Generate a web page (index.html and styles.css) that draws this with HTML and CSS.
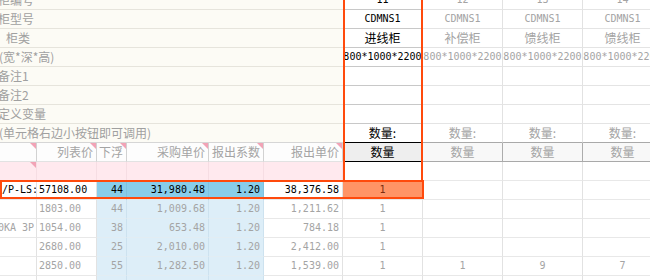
FILE: index.html
```html
<!DOCTYPE html>
<html lang="zh-CN">
<head>
<meta charset="utf-8">
<title>报价表</title>
<link rel="stylesheet" href="styles.css">
</head>
<body>
<div class="sheet">
  <div class="grid">
    <!-- 表头信息区 -->
    <div class="c lbl ind-2">柜编号</div>
    <div class="c sel ctr n k">11</div>
    <div class="c top ctr n">12</div>
    <div class="c top ctr n">13</div>
    <div class="c top ctr n">14</div>

    <div class="c lbl ind-2">柜型号</div>
    <div class="c sel ctr n k">CDMNS1</div>
    <div class="c top ctr n">CDMNS1</div>
    <div class="c top ctr n">CDMNS1</div>
    <div class="c top ctr n">CDMNS1</div>

    <div class="c lbl ind6">柜类</div>
    <div class="c sel ctr k">进线柜</div>
    <div class="c top ctr">补偿柜</div>
    <div class="c top ctr">馈线柜</div>
    <div class="c top ctr">馈线柜</div>

    <div class="c lbl ind-1">(宽*深*高)</div>
    <div class="c sel ctr n k">800*1000*2200</div>
    <div class="c top ctr n">800*1000*2200</div>
    <div class="c top ctr n">800*1000*2200</div>
    <div class="c top ctr n">800*1000*2200</div>

    <div class="c lbl ind-2">备注1</div>
    <div class="c sel"></div>
    <div class="c top"></div>
    <div class="c top"></div>
    <div class="c top"></div>

    <div class="c lbl ind-2">备注2</div>
    <div class="c sel"></div>
    <div class="c top"></div>
    <div class="c top"></div>
    <div class="c top"></div>

    <div class="c lbl ind-2">定义变量</div>
    <div class="c sel"></div>
    <div class="c top"></div>
    <div class="c top"></div>
    <div class="c top"></div>

    <div class="c lbl lbl-last ind-1">(单元格右边小按钮即可调用)</div>
    <div class="c sel sel-last ctr k">数量:</div>
    <div class="c top top-last ctr">数量:</div>
    <div class="c top top-last ctr">数量:</div>
    <div class="c top top-last ctr">数量:</div>

    <!-- 列标题 -->
    <div class="c hd tri"></div>
    <div class="c hd tri r">列表价</div>
    <div class="c hd tri r">下浮</div>
    <div class="c hd tri r">采购单价</div>
    <div class="c hd tri r">报出系数</div>
    <div class="c hd tri r">报出单价</div>
    <div class="c qh ctr">数量</div>
    <div class="c qh2 ctr">数量</div>
    <div class="c qh2 ctr">数量</div>
    <div class="c qh2 ctr">数量</div>

    <!-- 粉色空行 -->
    <div class="c pink tri"></div>
    <div class="c pink"></div>
    <div class="c pink"></div>
    <div class="c pink"></div>
    <div class="c pink"></div>
    <div class="c pink"></div>
    <div class="c"></div>
    <div class="c"></div>
    <div class="c"></div>
    <div class="c"></div>

    <!-- 选中行 -->
    <div class="c n k l">/P-LS:</div>
    <div class="c n k l">57108.00</div>
    <div class="c sky n k r">44</div>
    <div class="c sky n k r">31,980.48</div>
    <div class="c sky n k r">1.20</div>
    <div class="c n k r">38,376.58</div>
    <div class="c salmon n ctr">1</div>
    <div class="c"></div>
    <div class="c"></div>
    <div class="c"></div>

    <!-- 数据行 -->
    <div class="c"></div>
    <div class="c n l">1803.00</div>
    <div class="c blue n r">44</div>
    <div class="c blue n r">1,009.68</div>
    <div class="c blue n r">1.20</div>
    <div class="c n r">1,211.62</div>
    <div class="c n ctr">1</div>
    <div class="c"></div>
    <div class="c"></div>
    <div class="c"></div>

    <div class="c n cut">0KA 3P</div>
    <div class="c n l">1054.00</div>
    <div class="c blue n r">38</div>
    <div class="c blue n r">653.48</div>
    <div class="c blue n r">1.20</div>
    <div class="c n r">784.18</div>
    <div class="c n ctr">1</div>
    <div class="c"></div>
    <div class="c"></div>
    <div class="c"></div>

    <div class="c"></div>
    <div class="c n l">2680.00</div>
    <div class="c blue n r">25</div>
    <div class="c blue n r">2,010.00</div>
    <div class="c blue n r">1.20</div>
    <div class="c n r">2,412.00</div>
    <div class="c n ctr">1</div>
    <div class="c"></div>
    <div class="c"></div>
    <div class="c"></div>

    <div class="c"></div>
    <div class="c n l">2850.00</div>
    <div class="c blue n r">55</div>
    <div class="c blue n r">1,282.50</div>
    <div class="c blue n r">1.20</div>
    <div class="c n r">1,539.00</div>
    <div class="c n ctr">1</div>
    <div class="c n ctr">1</div>
    <div class="c n ctr">9</div>
    <div class="c n ctr">7</div>

    <div class="c"></div>
    <div class="c"></div>
    <div class="c blue"></div>
    <div class="c blue"></div>
    <div class="c blue"></div>
    <div class="c"></div>
    <div class="c"></div>
    <div class="c"></div>
    <div class="c"></div>
    <div class="c"></div>
  </div>
  <div class="hl-col"></div>
  <div class="hl-row"></div>
</div>
</body>
</html>
```

FILE: styles.css
```css
* {
  box-sizing: border-box;
  margin: 0;
  padding: 0;
}

html, body {
  width: 650px;
  height: 280px;
  overflow: hidden;
  background: #ffffff;
}

body {
  font-family: "Noto Sans CJK SC", "Liberation Sans", sans-serif;
  font-size: 12px;
  line-height: 18px;
  color: #000;
}

.sheet {
  position: relative;
  width: 663px;
  height: 289px;
  overflow: hidden;
  margin-top: -9px;
}

.grid {
  display: grid;
  grid-template-columns: 37px 60px 30px 82px 55px 79px 80px 80px 80px 80px;
  grid-auto-rows: 19px;
}

.c {
  position: relative;
  display: flex;
  align-items: center;
  overflow: hidden;
  white-space: nowrap;
  border-right: 1px solid #e2e2e2;
  border-bottom: 1px solid #e8e8e8;
  color: #a4a4a4;
  background: #ffffff;
}

/* text helpers */
.n {
  font-family: "DejaVu Sans Mono", "Liberation Mono", monospace;
  font-size: 10px;
}
.k { color: #000; }
.ctr { justify-content: center; }
.r { justify-content: flex-end; padding-right: 3px; }
.l { justify-content: flex-start; padding-left: 2px; }
.cut { display: block; text-indent: -2px; }

/* top label block */
.lbl {
  display: block;
  grid-column: span 6;
  background: #fcfbf5;
  border-right: none;
  border-bottom-color: #e6e4dc;
  color: #a0a0a0;
}
.lbl-last { border-bottom-color: #d6d6d6; }
.ind-2 { text-indent: -2px; }
.ind-1 { text-indent: -1px; }
.ind6 { text-indent: 6px; }

.sel {
  border-bottom-color: #c8c8c8;
}
.sel-last { border-bottom-color: #000; }

.top {
  border-bottom-color: #e4e4e4;
  border-right-color: #e2e2e2;
}
.top-last { border-bottom-color: #a9a9a9; }

/* column headers */
.hd {
  background: #fdfdfd;
  border-right-color: #d2d2d2;
  border-bottom-color: #e2e2e2;
}
.tri::after {
  content: "";
  position: absolute;
  top: 0;
  right: 0;
  border-top: 6px solid #f2a3b6;
  border-left: 6px solid transparent;
}
.qh {
  background: #eeeeee;
  color: #000;
  border-bottom-color: #000;
}
.qh2 {
  background: #f8f8f8;
  border-right-color: #acacac;
  border-bottom-color: #a9a9a9;
}

/* rows */
.pink {
  background: #ffe9ee;
  border-right-color: #f6dde3;
  border-bottom-color: #ece2e4;
}
.sky {
  background: #88cdea;
  border-right-color: #7fc2df;
}
.blue {
  background: #ddeef8;
  border-right-color: #cde2ef;
  border-bottom-color: #e2edf3;
}
.salmon {
  background: #ff9466;
  color: #7a2c10;
}

/* selection outlines (overlay) */
.hl-col {
  position: absolute;
  left: 343px;
  top: -4px;
  width: 80px;
  height: 195px;
  border: 2px solid #ff4a0c;
  pointer-events: none;
}
.hl-row {
  position: absolute;
  left: 0;
  top: 189px;
  width: 424px;
  height: 19px;
  border: 2px solid #ff4a0c;
  pointer-events: none;
}
```
